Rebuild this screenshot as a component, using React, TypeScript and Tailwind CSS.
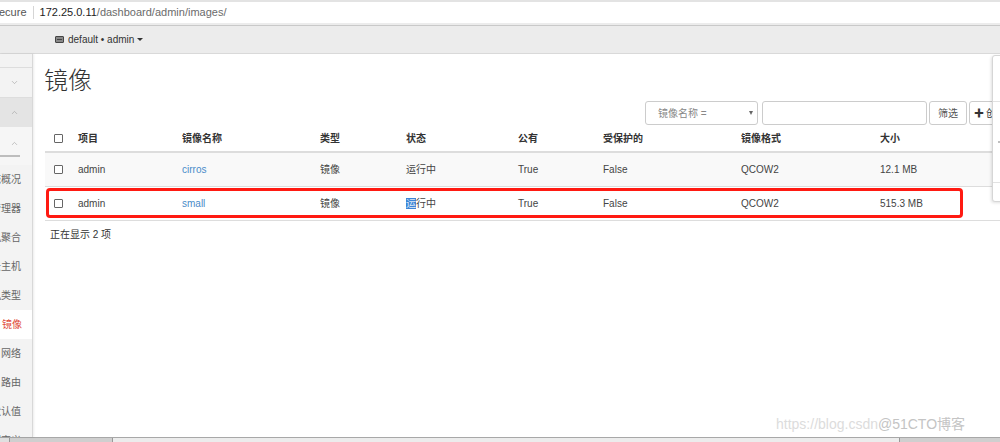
import React from "react";
import { ChevronDown, ChevronUp } from "lucide-react";

const FONT = "font-['Liberation_Sans','Noto_Sans_CJK_SC',sans-serif]";

const sideItems = [
  { t: "系统概况", active: false },
  { t: "虚拟机管理器", active: false },
  { t: "主机聚合", active: false },
  { t: "云主机", active: false },
  { t: "云主机类型", active: false },
  { t: "镜像", active: true },
  { t: "网络", active: false },
  { t: "路由", active: false },
  { t: "默认值", active: false },
  { t: "元数据定义", active: false },
];

const cols = "grid grid-cols-[27px_104px_138px_86px_112px_85px_138px_139px_200px]";

function Check() {
  return <span className="block w-[9px] h-[9px] border border-[#666] rounded-[1px] bg-white" />;
}

const rows = [
  { name: "cirros", size: "12.1 MB", bg: "bg-[#f9f9f9]", mark: false },
  { name: "small", size: "515.3 MB", bg: "bg-white", mark: true },
];

export default function App() {
  return (
    <div className={`w-[1000px] h-[442px] overflow-hidden relative bg-white ${FONT}`}>
      {/* address bar */}
      <div className="h-[2px] bg-[#e3e3e3]" />
      <div className="h-[21px] bg-white flex items-center text-[11px] leading-none">
        <span className="text-[#555] ml-[-1px]">ecure</span>
        <span className="mx-[6px] w-px h-[13px] bg-[#d5d5d5]" />
        <span className="text-[#222]">172.25.0.11</span>
        <span className="text-[#6b6b6b]">/dashboard/admin/images/</span>
      </div>
      <div className="h-[3px] bg-[#ececec] border-b border-[#c9c9c9]" />
      {/* top header */}
      <div className="h-[28px] bg-[#ececec] border-b border-[#d9d9d9] flex items-center pl-[55px] text-[10px] text-[#333]">
        <span className="w-[9px] h-[7px] border-[1.5px] border-[#444] rounded-[1px] mr-[4px] flex flex-col justify-center bg-[#888]">
          <span className="h-px bg-[#444] mx-[1px]" />
        </span>
        <span>default • admin</span>
        <span className="ml-[3px] w-0 h-0 border-l-[3px] border-r-[3px] border-t-[3px] border-l-transparent border-r-transparent border-t-[#333]" />
      </div>

      {/* body */}
      <div className="flex h-[383px]">
        {/* sidebar */}
        <div className="w-[33px] shrink-0 bg-[#f3f3f3] border-r border-[#d8d8d8] shadow-[1px_0_2px_rgba(0,0,0,0.08)] flex flex-col overflow-hidden">
          <div className="h-[14px] shrink-0 border-b border-[#dddddd]" />
          <div className="h-[30px] shrink-0 border-b border-[#dddddd] flex items-center justify-center pr-[4px]">
            <ChevronDown size={9} strokeWidth={1.5} className="text-[#999]" />
          </div>
          <div className="h-[29px] shrink-0 bg-[#e4e4e4] flex items-center justify-center pr-[4px]">
            <ChevronUp size={9} strokeWidth={1.5} className="text-[#999]" />
          </div>
          <div className="h-[30px] shrink-0 flex flex-col items-center justify-end pr-[4px] bg-[#f6f6f6]">
            <ChevronUp size={9} strokeWidth={1.5} className="text-[#999] mb-[7px]" />
            <div className="self-start w-[20px] h-[2px] bg-[#bdbdbd]" />
          </div>
          <div className="h-[8px] shrink-0 bg-[#f6f6f6]" />
          {sideItems.map((it) => (
            <div
              key={it.t}
              className={`h-[29px] shrink-0 flex items-center justify-end pr-[11px] overflow-hidden whitespace-nowrap text-[10px] ${
                it.active ? "bg-white text-[#e04a3a] mr-[-1px]" : "text-[#666]"
              }`}
            >
              {it.t}
            </div>
          ))}
        </div>

        {/* main */}
        <div className="flex-1 overflow-hidden pl-[11px] pt-[10px]">
          <h1 className="h-[34px] leading-[34px] text-[24px] font-light text-[#333]">镜像</h1>
          <div className="flex items-center mt-[3px] h-[24px] text-[10px] whitespace-nowrap">
            <div className="ml-[601px] w-[113px] h-[24px] shrink-0 border border-[#ccc] rounded-[3px] flex items-center pl-[12px] pr-[4px] text-[#888]">
              <span className="flex-1">镜像名称 =</span>
              <span className="w-0 h-0 border-l-[2.5px] border-r-[2.5px] border-t-[4px] border-l-transparent border-r-transparent border-t-[#666]" />
            </div>
            <div className="ml-[4px] w-[165px] h-[24px] shrink-0 border border-[#ccc] rounded-[3px]" />
            <div className="ml-[2px] w-[38px] h-[24px] shrink-0 border border-[#ccc] rounded-[3px] flex items-center justify-center text-[#555]">
              筛选
            </div>
            <div className="ml-[2px] w-[60px] h-[24px] shrink-0 border border-[#ccc] rounded-[3px] flex items-center pl-[4px] text-[#333]">
              <span className="text-[10px] mr-[2px] font-bold">✚</span>
              <span>创建镜像</span>
            </div>
          </div>

          {/* table */}
          <div className="ml-[1px] mt-[1px] w-[1100px] text-[10px] text-[#444] whitespace-nowrap">
            <div className={`${cols} h-[27px] items-center border-b-2 border-[#dddddd] font-bold text-[#333]`}>
              <div className="pl-[9px]"><Check /></div>
              <div className="pl-[6px]">项目</div>
              <div className="pl-[6px]">镜像名称</div>
              <div className="pl-[6px]">类型</div>
              <div className="pl-[6px]">状态</div>
              <div className="pl-[6px]">公有</div>
              <div className="pl-[6px]">受保护的</div>
              <div className="pl-[6px]">镜像格式</div>
              <div className="pl-[6px]">大小</div>
            </div>
            {rows.map((r) => (
              <div key={r.name} className={`relative ${cols} h-[34px] items-center border-b border-[#dddddd] ${r.bg}`}>
                <div className="pl-[9px]"><Check /></div>
                <div className="pl-[6px]">admin</div>
                <div className="pl-[6px] text-[#4a8cc9]">{r.name}</div>
                <div className="pl-[6px]">镜像</div>
                <div className="pl-[6px]">
                  {r.mark ? (
                    <>
                      <span className="bg-[#3d84d6] text-[#dfe9f7]">运</span>行中
                    </>
                  ) : (
                    "运行中"
                  )}
                </div>
                <div className="pl-[6px]">True</div>
                <div className="pl-[6px]">False</div>
                <div className="pl-[6px]">QCOW2</div>
                <div className="pl-[6px]">{r.size}</div>
                {r.mark && (
                  <div className="absolute left-[1px] top-[1px] w-[917px] h-[30px] border-[3px] border-[#ff1a12] rounded-[4px]" />
                )}
              </div>
            ))}
            <div className="h-[28px] leading-[28px] pl-[5px] text-[#333]">正在显示 2 项</div>
          </div>
        </div>
      </div>

      {/* bottom scrollbar */}
      <div className="h-[5px] bg-[#cfcfcf] flex border-t border-[#a8a8a8]">
        <div className="w-[10px] h-full bg-[#e0e0e0] border-r border-[#999]" />
        <div className="ml-[102px] w-[788px] h-full bg-[#ececec] border-l border-r border-[#999]" />
      </div>

      {/* right floating panel */}
      <div className="absolute left-[992px] top-[55px] w-[20px] h-[147px] bg-white border border-[#d6d6d6] rounded-[3px] shadow-[-1px_1px_3px_rgba(0,0,0,0.12)] flex flex-col">
        <div className="h-[46px] border-b border-[#e2e2e2]" />
        <div className="h-[81px] border-b border-[#e2e2e2] flex items-center pl-[5px]">
          <span className="w-[2px] h-[2px] bg-[#aaa] rounded-full" />
        </div>
      </div>

      {/* watermark */}
      <div className="absolute left-[776px] top-[414px] text-[14px] leading-[20px] whitespace-nowrap">
        <span className="text-[#dcdcdc]">https://blog.csdn</span>
        <span className="text-[#c4c4c4]">@51CTO博客</span>
      </div>
    </div>
  );
}
